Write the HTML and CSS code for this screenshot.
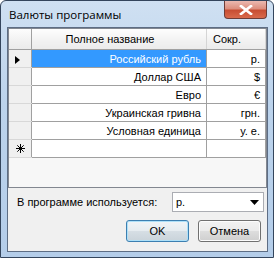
FILE: index.html
```html
<!DOCTYPE html>
<html lang="ru">
<head>
    <meta charset="UTF-8">
    <title>Валюты программы</title>
    <link rel="stylesheet" href="styles.css">
</head>
<body>
    <div class="window">
        <!-- Title bar -->
        <div class="titlebar">
            <span class="title">Валюты программы</span>
            <span class="close-btn">
                <svg width="14" height="10" viewBox="0 0 14 10">
                    <path d="M2 1 L12 9 M12 1 L2 9" stroke="#fff" stroke-width="2.6" stroke-linecap="square"/>
                </svg>
            </span>
        </div>

        <div class="client">
            <!-- Currency grid -->
            <div class="grid">
                <table>
                    <thead>
                        <tr>
                            <th class="ind"></th>
                            <th class="name-head">Полное название</th>
                            <th class="abbr-head">Сокр.</th>
                        </tr>
                    </thead>
                    <tbody>
                        <tr>
                            <td class="ind"><span class="arrow"></span></td>
                            <td class="selected">Российский рубль</td>
                            <td>р.</td>
                        </tr>
                        <tr>
                            <td class="ind"></td>
                            <td>Доллар США</td>
                            <td>$</td>
                        </tr>
                        <tr>
                            <td class="ind"></td>
                            <td>Евро</td>
                            <td>€</td>
                        </tr>
                        <tr>
                            <td class="ind"></td>
                            <td>Украинская гривна</td>
                            <td>грн.</td>
                        </tr>
                        <tr>
                            <td class="ind"></td>
                            <td>Условная единица</td>
                            <td>у. е.</td>
                        </tr>
                        <tr>
                            <td class="ind">
                                <svg class="star" width="9" height="9" viewBox="0 0 9 9">
                                    <path d="M4.5 0 V9 M0 4.5 H9 M1.3 1.3 L7.7 7.7 M7.7 1.3 L1.3 7.7" stroke="#000" stroke-width="1"/>
                                </svg>
                            </td>
                            <td></td>
                            <td></td>
                        </tr>
                    </tbody>
                </table>
            </div>

            <!-- Bottom controls -->
            <div class="bottom">
                <div class="used-row">
                    <span class="label">В программе используется:</span>
                    <div class="combo">
                        <span>р.</span>
                        <svg width="9" height="5" viewBox="0 0 9 5"><path d="M0 0 H9 L4.5 5 Z" fill="#000"/></svg>
                    </div>
                </div>
                <div class="buttons">
                    <button class="btn default">OK</button>
                    <button class="btn">Отмена</button>
                </div>
            </div>
        </div>
    </div>
</body>
</html>
```

FILE: styles.css
```css
body {
    margin: 0;
    font-family: "Liberation Sans", Arial, sans-serif;
    font-size: 11px;
}

.window {
    width: 274px;
    height: 258px;
    box-sizing: border-box;
    border: 1px solid #34455c;
    border-radius: 6px 6px 0 0;
    background: linear-gradient(180deg, #cfe0f2 0%, #bcd3ec 40%, #b4cde9 100%);
    display: flex;
    flex-direction: column;
}

.titlebar {
    height: 26px;
    display: flex;
    justify-content: space-between;
    align-items: flex-start;
}

.title {
    padding: 6px 0 0 8px;
    font-family: "Open Sans", sans-serif;
    font-size: 11.5px;
    color: #000;
}

.close-btn {
    width: 41px;
    height: 17px;
    margin-right: 6px;
    border: 1px solid #6e3d38;
    border-top: none;
    border-radius: 0 0 4px 4px;
    background: linear-gradient(180deg, #ebb9b0 0%, #dc8f7f 45%, #c84e33 55%, #d96a4c 100%);
    display: flex;
    align-items: center;
    justify-content: center;
}

.client {
    flex: 1;
    margin: 0 5px 5px 6px;
    border: 1px solid #5d6d84;
    background: #f0f0f0;
    padding: 0;
}

/* Grid */
.grid {
    height: 160px;
    border: 1px solid #828790;
    background: #f7f7f7;
    box-sizing: border-box;
}

table {
    border-collapse: collapse;
    width: 100%;
    table-layout: fixed;
}

th {
    height: 20px;
    padding: 0;
    font-weight: normal;
    background: linear-gradient(180deg, #fdfdfd 0%, #f3f3f3 50%, #ebebeb 100%);
    border-right: 1px solid #d5d5d5;
    border-bottom: 1px solid #a0a0a0;
}

.name-head {
    text-align: center;
    padding-right: 18px;
}

.abbr-head {
    text-align: left;
    padding-left: 6px;
    width: 52px;
}

th.ind,
td.ind {
    width: 22px;
    background: #f0f0f0;
    border-right: 1px solid #a0a0a0;
}

th.ind {
    background: linear-gradient(180deg, #fdfdfd 0%, #f3f3f3 50%, #ebebeb 100%);
    border-right: 1px solid #a0a0a0;
}

td {
    height: 17px;
    padding: 0 5px 0 0;
    text-align: right;
    background: #fff;
    border-right: 1px solid #a0a0a0;
    border-bottom: 1px solid #a0a0a0;
    white-space: nowrap;
}

td.ind {
    border-bottom: 1px solid #d8d8d8;
    text-align: left;
    padding: 0 0 0 6px;
}

.selected {
    background: #3399ff;
    color: #fff;
}

.arrow {
    display: inline-block;
    width: 0;
    height: 0;
    border-top: 4px solid transparent;
    border-bottom: 4px solid transparent;
    border-left: 5px solid #000;
    vertical-align: middle;
}

.star {
    display: block;
    margin-left: 1px;
}

/* Bottom */
.bottom {
    padding: 4px 3px 0 9px;
}

.used-row {
    display: flex;
    align-items: center;
    justify-content: space-between;
}

.combo {
    border: 1px solid #abadb3;
    background: #fff;
    display: flex;
    align-items: center;
    justify-content: space-between;
    padding: 0 4px 0 3px;
    box-sizing: border-box;
    width: 92px;
    height: 20px;
}

.buttons {
    display: flex;
    justify-content: flex-end;
    gap: 9px;
    margin: 8px 3px 0 0;
}

.btn {
    width: 63px;
    height: 22px;
    padding: 0;
    font-family: "Liberation Sans", Arial, sans-serif;
    font-size: 11px;
    color: #000;
    border: 1px solid #707070;
    border-radius: 3px;
    background: linear-gradient(180deg, #f2f2f2 0%, #ebebeb 48%, #dddddd 52%, #cfcfcf 100%);
    box-shadow: inset 0 0 0 1px #fcfcfc;
}

.btn.default {
    border-color: #3c7fb1;
    background: linear-gradient(180deg, #f0f4f7 0%, #e6ecf0 48%, #d6dee4 52%, #c9d3da 100%);
    box-shadow: inset 0 0 0 1px #aee0f8;
}
```
